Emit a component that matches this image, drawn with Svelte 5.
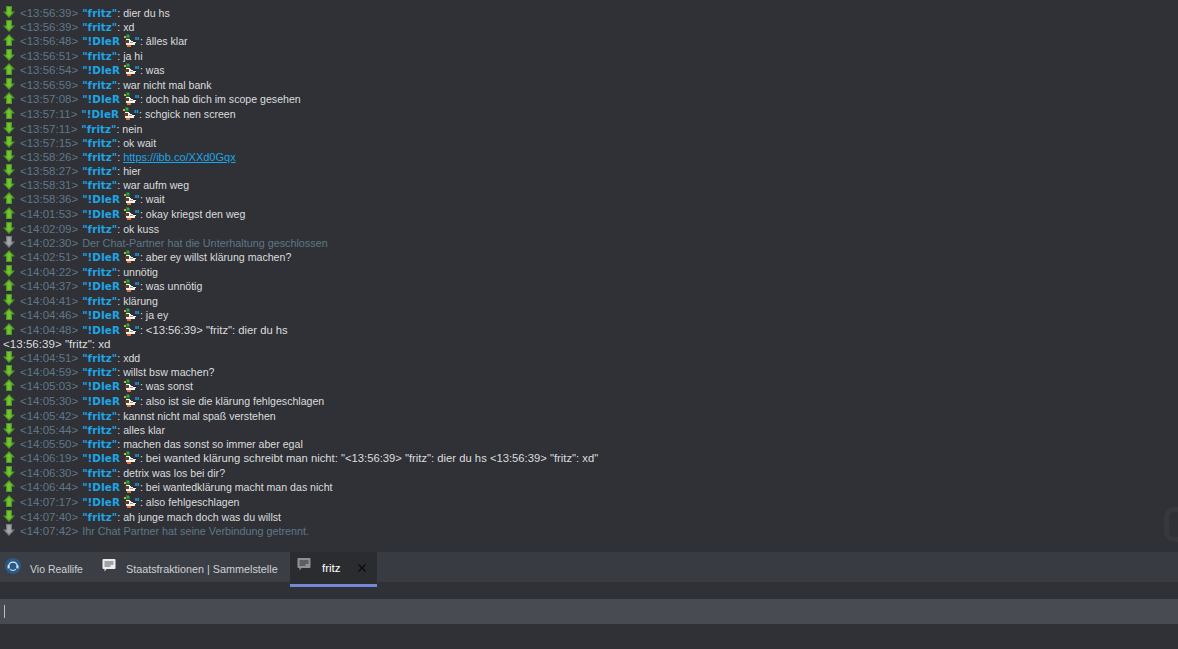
<script>
  const F = '"fritz"';
  const D = '"!DIeR ';
  const rows = [
    ['d','13:56:39','f','dier du hs'],['d','13:56:39','f','xd'],['u','13:56:48','i','âlles klar'],
    ['d','13:56:51','f','ja hi'],['u','13:56:54','i','was'],['d','13:56:59','f','war nicht mal bank'],
    ['u','13:57:08','i','doch hab dich im scope gesehen'],['u','13:57:11','i','schgick nen screen'],
    ['d','13:57:11','f','nein'],['d','13:57:15','f','ok wait'],['d','13:58:26','f','https://ibb.co/XXd0Gqx','link'],
    ['d','13:58:27','f','hier'],['d','13:58:31','f','war aufm weg'],['u','13:58:36','i','wait'],
    ['u','14:01:53','i','okay kriegst den weg'],['d','14:02:09','f','ok kuss'],
    ['s','14:02:30','','Der Chat-Partner hat die Unterhaltung geschlossen'],
    ['u','14:02:51','i','aber ey willst klärung machen?'],['d','14:04:22','f','unnötig'],
    ['u','14:04:37','i','was unnötig'],['d','14:04:41','f','klärung'],['u','14:04:46','i','ja ey'],
    ['u','14:04:48','i','<13:56:39> "fritz": dier du hs','','<13:56:39> "fritz": xd'],
    ['d','14:04:51','f','xdd'],['d','14:04:59','f','willst bsw machen?'],['u','14:05:03','i','was sonst'],
    ['u','14:05:30','i','also ist sie die klärung fehlgeschlagen'],['d','14:05:42','f','kannst nicht mal spaß verstehen'],
    ['d','14:05:44','f','alles klar'],['d','14:05:50','f','machen das sonst so immer aber egal'],
    ['u','14:06:19','i','bei wanted klärung schreibt man nicht: "<13:56:39> "fritz": dier du hs <13:56:39> "fritz": xd"'],
    ['d','14:06:30','f','detrix was los bei dir?'],['u','14:06:44','i','bei wantedklärung macht man das nicht'],
    ['u','14:07:17','i','also fehlgeschlagen'],['d','14:07:40','f','ah junge mach doch was du willst'],
    ['s','14:07:42','','Ihr Chat Partner hat seine Verbindung getrennt.']
  ];
  const SEP = ': ';
</script>

{#snippet arrow(kind)}
  <svg class="arrow" viewBox="0 0 12 12" width="12" height="12">
    <g class={kind === 's' ? 'grey' : 'green'}>
      {#if kind === 'u'}
        <path class="a-out" d="M6 0 L12 6.5 L9 6.5 L9 12 L3 12 L3 6.5 L0 6.5 Z" />
        <path class="a-in" d="M6 2 L9.5 5.5 L7.8 5.5 L7.8 11 L4.2 11 L4.2 5.5 L2.5 5.5 Z" />
      {:else}
        <path class="a-out" d="M3 0 L9 0 L9 5.5 L12 5.5 L6 12 L0 5.5 L3 5.5 Z" />
        <path class="a-in" d="M4.2 1 L7.8 1 L7.8 6.5 L9.5 6.5 L6 10 L2.5 6.5 L4.2 6.5 Z" />
      {/if}
    </g>
  </svg>
{/snippet}

{#snippet duck()}
  <svg class="duck" viewBox="0 0 12 14" width="12" height="14" shape-rendering="crispEdges">
    <path d="M2 0 h3 v1 h1 v3 h-1 v1 h-3 z" fill="#1f7038" />
    <rect x="3" y="1" width="2" height="2" fill="#3aa35a" />
    <rect x="0" y="2" width="2" height="2" fill="#dca92e" />
    <rect x="2" y="5" width="4" height="1" fill="#f2f2f2" />
    <path d="M1 6 h4 v3 h-4 z" fill="#5f3f28" />
    <path d="M5 6 h2 v1 h2 v1 h3 v1 h-1 v2 h-9 v-2 h3 z" fill="#f0f0ec" />
    <rect x="6" y="8" width="3" height="1" fill="#9a9a9a" />
    <rect x="10" y="7" width="2" height="1" fill="#1a1a1a" />
    <rect x="3" y="11" width="4" height="2" fill="#e6702a" />
  </svg>
{/snippet}

<div class="app">
  <main class="log">
    {#each rows as r}
      <div class="row" class:tall={r[2] === 'i' && !r[5]}>
        {@render arrow(r[0])}
        <div class="body"><span class="time">&lt;{r[1]}&gt;</span>{#if r[2] === 'f'}<b class="name">{F}</b><span class="msg">{SEP}</span>{:else if r[2] === 'i'}<b class="name">{D}</b>{@render duck()}<b class="name">"</b><span class="msg">{SEP}</span>{/if}{#if r[4] === 'link'}<span class="link">{r[3]}</span>{:else if r[0] === 's'}<span class="sys">{r[3]}</span>{:else}<span class="msg" class:quoted={r[3].includes('<13')}>{r[3]}</span>{/if}</div>
      </div>
      {#if r[5]}
        <div class="cont">{r[5]}</div>
      {/if}
    {/each}
  </main>
  <div class="watermark"></div>
  <nav class="tabs">
    <div class="tab first">
      <svg viewBox="0 0 16 16" width="16" height="16">
        <circle cx="8" cy="8" r="8" fill="#2a5a88" />
        <path d="M3.6 8.5 a4.4 4.4 0 0 1 8.8 0" fill="none" stroke="#dbe8f3" stroke-width="1.4" />
        <rect x="2.6" y="7.5" width="2" height="3" fill="#dbe8f3" />
        <rect x="11.4" y="7.5" width="2" height="3" fill="#dbe8f3" />
        <path d="M5 11.5 q3 2 6 0" fill="none" stroke="#dbe8f3" stroke-width="1" />
      </svg>
      <span class="vio">Vio Reallife</span>
    </div>
    <div class="tab second">
      <svg viewBox="0 0 14 14" width="14" height="14">
        <path d="M0.5 1 q0 -1 1 -1 h11 q1 0 1 1 v8 q0 1 -1 1 h-8 l-2 2.5 v-2.5 h-1 q-1 0 -1 -1 z" fill="#ececec" />
        <path d="M2.5 3 h9 M2.5 5 h9 M2.5 7 h6" stroke="#55585c" stroke-width="1" />
      </svg>
      <span class="staats">Staatsfraktionen | Sammelstelle</span>
    </div>
    <div class="tab active">
      <svg viewBox="0 0 14 14" width="14" height="14">
        <path d="M0.5 1 q0 -1 1 -1 h11 q1 0 1 1 v8 q0 1 -1 1 h-8 l-2 2.5 v-2.5 h-1 q-1 0 -1 -1 z" fill="#8f9194" />
        <path d="M2.5 3 h9 M2.5 5 h9 M2.5 7 h6" stroke="#2a2c30" stroke-width="1" />
      </svg>
      <span class="tname">fritz</span>
      <svg class="close" viewBox="0 0 8 8" width="8" height="8">
        <path d="M0.5 0.5 L7.5 7.5 M7.5 0.5 L0.5 7.5" stroke="#0c0c0c" stroke-width="1.4" />
      </svg>
    </div>
  </nav>
  <div class="input"><i class="caret"></i></div>
</div>

<style>
  :global(body) { margin: 0; background: #2f3136; }
  .app {
    position: relative;
    width: 1178px;
    height: 649px;
    overflow: hidden;
    background: #2f3136;
    font-family: "Liberation Sans", Arial, sans-serif;
    font-size: 10.6px;
    display: flex;
    flex-direction: column;
  }
  .log { height: 552px; padding-top: 6px; box-sizing: border-box; flex: none; }
  .row { display: flex; height: 14px; align-items: flex-start; }
  .row.tall { height: 15px; }
  .green .a-out { fill: #4c9822; }
  .green .a-in { fill: #74c232; }
  .grey .a-out { fill: #77797c; }
  .grey .a-in { fill: #a3a5a7; }
  .arrow { margin: 0 5px 0 3px; flex: none; }
  .body { white-space: pre; line-height: 14px; height: 14px; }
  .time { color: #5f7788; font-size: 11.5px; margin-right: 4px; }
  .name { color: #1ea5e6; font-weight: 700; font-family: "DejaVu Sans", sans-serif; font-size: 10.4px; }
  .msg { color: #dcddde; }
  .msg.quoted { font-size: 11.25px; }
  .sys { color: #5f7788; font-size: 10.8px; }
  .link { color: #1ea5e6; text-decoration: underline; font-size: 11px; }
  .cont { color: #dcddde; height: 14px; line-height: 14px; padding-left: 3px; font-size: 11.6px; }
  .duck { vertical-align: -3px; margin-right: -1px; }
  .watermark {
    position: absolute;
    left: 1164px; top: 507px;
    width: 40px; height: 25px;
    border: 5px solid #35383d;
    border-radius: 10px;
  }
  .tabs {
    height: 30px;
    background: #383b41;
    display: flex;
    flex: none;
    color: #cfd1d4;
    font-size: 11px;
    white-space: nowrap;
  }
  .tab { display: flex; align-items: center; height: 30px; padding-top: 3px; box-sizing: border-box; }
  .tab svg { margin-top: -5px; flex: none; }
  .tab.first svg { margin-top: -6px; }
  .tab.first { width: 102px; padding-left: 5px; gap: 9px; background: #3b3e44; }
  .vio { font-size: 10.5px; }
  .staats { font-size: 10.8px; }
  .tab.second { width: 188px; gap: 10px; background: #3b3e44; }
  .tab.active {
    width: 87px;
    height: 35px;
    padding: 0 0 1px 7px;
    background: #2a2c30;
    border-bottom: 3px solid #7289da;
    color: #fff;
    gap: 11px;
  }
  .tname { width: 25px; font-size: 11.5px; }
  .tab .close { margin: 1px 0 0 0; }
  .input {
    position: absolute;
    left: 0; right: 0; top: 599px;
    height: 25px;
    background: #484b52;
    display: flex;
    align-items: center;
  }
  .caret { width: 1px; height: 13px; margin-left: 4px; background: #bdbdbd; }
</style>
